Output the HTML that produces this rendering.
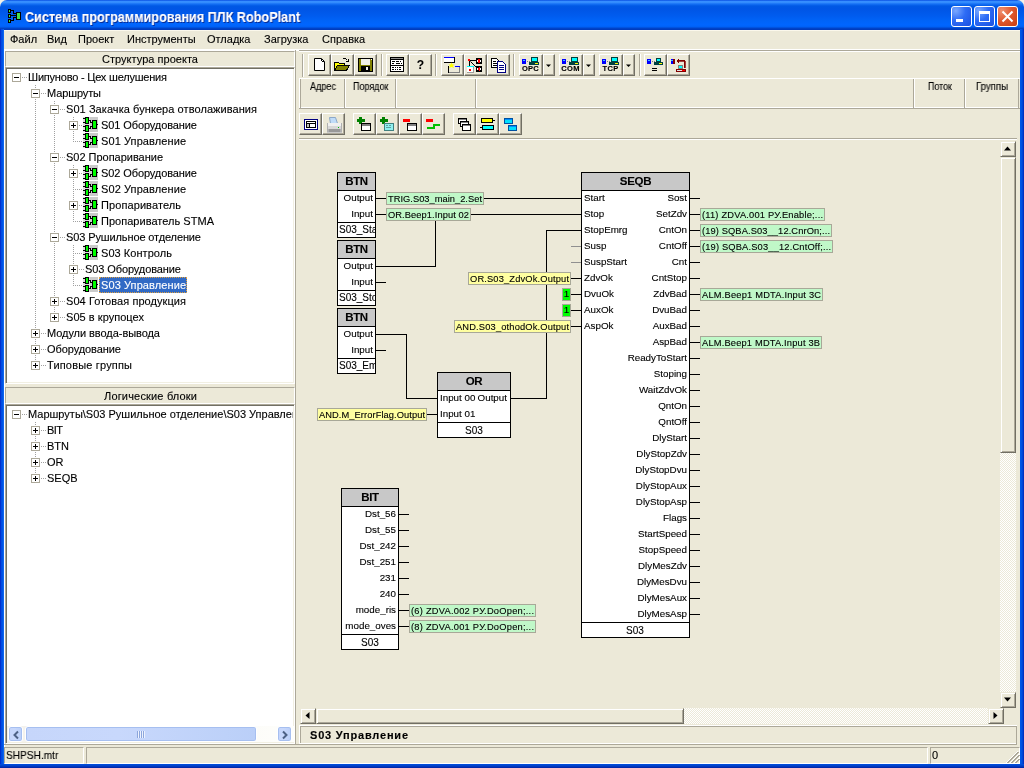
<!DOCTYPE html><html><head><meta charset="utf-8"><style>

*{margin:0;padding:0;box-sizing:border-box}
html,body{width:1024px;height:768px;overflow:hidden;background:#ECE9D8;font-family:'Liberation Sans', sans-serif;font-size:11px;color:#000}
div{position:absolute}
.t{will-change:transform;-webkit-text-stroke:0.12px currentColor}
.t{white-space:nowrap;line-height:13px}
.tb{border-top:1px solid #fff;border-left:1px solid #fff;border-right:1px solid #716F64;border-bottom:1px solid #716F64;box-shadow:inset -1px -1px 0 #ACA899}
svg{position:absolute;overflow:visible}

</style></head><body>
<div style="left:0;top:0;width:1024px;height:12px;background:#F4F1E8"></div>
<div style="left:0;top:0;width:1024px;height:30px;border-radius:7px 7px 0 0;background:linear-gradient(to bottom,#0040D8 0px,#2F86FF 1px,#3D95FF 2px,#1570F5 4px,#0058E4 6px,#0055E5 9px,#005CEF 16px,#0064F8 21px,#0066FF 25px,#0060F4 27px,#0046CC 28px,#0038B8 30px)"></div>
<svg style="left:8px;top:9px" width="14" height="15" shape-rendering="crispEdges"><rect x="0" y="0" width="3" height="4"/><rect x="0" y="5" width="3" height="4"/><rect x="0" y="10" width="3" height="4"/><rect x="1" y="1" width="1" height="2" fill="#40E040"/><rect x="1" y="6" width="1" height="2" fill="#40E040"/><rect x="1" y="11" width="1" height="2" fill="#40E040"/><rect x="3" y="1" width="3" height="1"/><rect x="5" y="1" width="1" height="4"/><rect x="5" y="4" width="3" height="1"/><rect x="3" y="6" width="5" height="1"/><rect x="3" y="11" width="3" height="1"/><rect x="5" y="8" width="1" height="4"/><rect x="5" y="8" width="3" height="1"/><rect x="8" y="3" width="5" height="8"/><rect x="9" y="4" width="3" height="6" fill="#48E048"/></svg>
<div class="t" style="left:25px;top:9px;font:bold 14px 'Liberation Sans', sans-serif;color:#fff;line-height:16px;text-shadow:1px 1px 0 #0A2A90;transform:scaleX(0.903);transform-origin:0 0">Система программирования ПЛК RoboPlant</div>
<div style="left:951px;top:6px;width:21px;height:21px;border:1px solid #fff;border-radius:3px;background:radial-gradient(circle at 20% 20%,#7AA8FF 0%,#2E6CF5 45%,#1A50E0 100%)">
<div style="left:4px;top:12px;width:7px;height:3px;background:#fff"></div>
</div>
<div style="left:974px;top:6px;width:21px;height:21px;border:1px solid #fff;border-radius:3px;background:radial-gradient(circle at 20% 20%,#7AA8FF 0%,#2E6CF5 45%,#1A50E0 100%)">
<div style="left:4px;top:4px;width:11px;height:11px;border:1px solid #fff;border-top-width:3px"></div>
</div>
<div style="left:997px;top:6px;width:21px;height:21px;border:1px solid #fff;border-radius:3px;background:radial-gradient(circle at 20% 20%,#F09070 0%,#E05A30 45%,#C83C10 100%)">
<svg style="left:4px;top:4px" width="11" height="11"><path d="M0.5 0.5L10.5 10.5M10.5 0.5L0.5 10.5" stroke="#fff" stroke-width="2"/></svg>
</div>
<div style="left:0;top:29px;width:4px;height:739px;background:linear-gradient(to right,#0018C0,#0048E0 1px,#0058E8 3px,#1A74FA 4px)"></div>
<div style="left:1020px;top:29px;width:4px;height:739px;background:linear-gradient(to right,#0058E8,#0050E0 2px,#0028B8 4px)"></div>
<div style="left:0;top:764px;width:1024px;height:4px;background:linear-gradient(to bottom,#0050E0,#0040C8 2px,#0020A0 4px)"></div>
<div style="left:4px;top:30px;width:1016px;height:1px;background:#FBF8EC"></div>
<div class="t" style="left:10px;top:33px;">Файл</div>
<div class="t" style="left:47px;top:33px;">Вид</div>
<div class="t" style="left:78px;top:33px;">Проект</div>
<div class="t" style="left:127px;top:33px;">Инструменты</div>
<div class="t" style="left:207px;top:33px;">Отладка</div>
<div class="t" style="left:264px;top:33px;">Загрузка</div>
<div class="t" style="left:322px;top:33px;">Справка</div>
<div style="left:4px;top:49px;width:1016px;height:2px;background:#fff"></div>
<div style="left:4px;top:49px;width:1px;height:715px;background:#fff"></div>
<svg width="0" height="0" style="left:0;top:0"><defs>
<symbol id="ico" viewBox="0 0 15 15" shape-rendering="crispEdges">
<rect x="0" y="0" width="15" height="15" fill="#CBCBCB"/>
<rect x="0" y="0" width="7" height="15" fill="#DCDCDC"/>
<rect x="0" y="1" width="2" height="1" fill="#000"/><rect x="0" y="5" width="2" height="1" fill="#000"/>
<rect x="0" y="9" width="2" height="1" fill="#000"/><rect x="0" y="13" width="2" height="1" fill="#000"/>
<rect x="2" y="0" width="4" height="7" fill="#000"/><rect x="3" y="1" width="2" height="5" fill="#00FF00"/>
<rect x="2" y="8" width="4" height="7" fill="#000"/><rect x="3" y="9" width="2" height="5" fill="#00FF00"/>
<rect x="6" y="3" width="2" height="1" fill="#000"/><rect x="7" y="3" width="1" height="3" fill="#000"/><rect x="7" y="5" width="2" height="1" fill="#000"/>
<rect x="6" y="11" width="2" height="1" fill="#000"/><rect x="7" y="9" width="1" height="3" fill="#000"/><rect x="7" y="9" width="2" height="1" fill="#000"/>
<rect x="9" y="3" width="5" height="9" fill="#000"/><rect x="10" y="4" width="3" height="7" fill="#00FF00"/>
<rect x="14" y="7" width="1" height="1" fill="#000"/>
</symbol>
</defs></svg>
<div style="left:5px;top:51px;width:290px;height:16px;background:#ECE9D8;border-top:1px solid #ACA899;border-left:1px solid #ACA899;border-right:1px solid #fff;border-bottom:1px solid #fff"></div>
<div class="t" style="left:102px;top:53px;font:11px 'Liberation Sans', sans-serif;;letter-spacing:0.029px">Структура проекта</div>
<div style="left:5px;top:67px;width:290px;height:317px;background:#fff;border-top:1px solid #ACA899;border-left:1px solid #ACA899;border-right:1px solid #fff;border-bottom:1px solid #fff;box-shadow:inset 1px 1px 0 #716F64,inset -1px -1px 0 #F1EFE2"></div>
<div style="left:35px;top:85px;width:1px;height:281px;background:repeating-linear-gradient(to bottom,#A0A0A0 0 1px,transparent 1px 2px)"></div>
<div style="left:54px;top:101px;width:1px;height:217px;background:repeating-linear-gradient(to bottom,#A0A0A0 0 1px,transparent 1px 2px)"></div>
<div style="left:73px;top:117px;width:1px;height:25px;background:repeating-linear-gradient(to bottom,#A0A0A0 0 1px,transparent 1px 2px)"></div>
<div style="left:73px;top:165px;width:1px;height:57px;background:repeating-linear-gradient(to bottom,#A0A0A0 0 1px,transparent 1px 2px)"></div>
<div style="left:73px;top:245px;width:1px;height:41px;background:repeating-linear-gradient(to bottom,#A0A0A0 0 1px,transparent 1px 2px)"></div>
<div style="left:16px;top:77px;width:11px;height:1px;background:repeating-linear-gradient(to right,#A0A0A0 0 1px,transparent 1px 2px)"></div>
<div style="left:12px;top:73px;width:9px;height:9px;border:1px solid #ACA899;background:#fff"></div>
<div style="left:14px;top:77px;width:5px;height:1px;background:#000"></div>
<div class="t" style="left:28px;top:71px;font:11px 'Liberation Sans', sans-serif;;letter-spacing:-0.203px">Шипуново - Цех шелушения</div>
<div style="left:35px;top:93px;width:11px;height:1px;background:repeating-linear-gradient(to right,#A0A0A0 0 1px,transparent 1px 2px)"></div>
<div style="left:31px;top:89px;width:9px;height:9px;border:1px solid #ACA899;background:#fff"></div>
<div style="left:33px;top:93px;width:5px;height:1px;background:#000"></div>
<div class="t" style="left:47px;top:87px;font:11px 'Liberation Sans', sans-serif;;letter-spacing:-0.114px">Маршруты</div>
<div style="left:54px;top:109px;width:11px;height:1px;background:repeating-linear-gradient(to right,#A0A0A0 0 1px,transparent 1px 2px)"></div>
<div style="left:50px;top:105px;width:9px;height:9px;border:1px solid #ACA899;background:#fff"></div>
<div style="left:52px;top:109px;width:5px;height:1px;background:#000"></div>
<div class="t" style="left:66px;top:103px;font:11px 'Liberation Sans', sans-serif;;letter-spacing:0.068px">S01 Закачка бункера отволаживания</div>
<div style="left:73px;top:125px;width:10px;height:1px;background:repeating-linear-gradient(to right,#A0A0A0 0 1px,transparent 1px 2px)"></div>
<div style="left:69px;top:121px;width:9px;height:9px;border:1px solid #ACA899;background:#fff"></div>
<div style="left:71px;top:125px;width:5px;height:1px;background:#000"></div>
<div style="left:73px;top:123px;width:1px;height:5px;background:#000"></div>
<svg style="left:83px;top:117px" width="15" height="15"><use href="#ico"/></svg>
<div class="t" style="left:101px;top:119px;font:11px 'Liberation Sans', sans-serif;;letter-spacing:-0.097px">S01 Оборудование</div>
<div style="left:73px;top:141px;width:10px;height:1px;background:repeating-linear-gradient(to right,#A0A0A0 0 1px,transparent 1px 2px)"></div>
<svg style="left:83px;top:133px" width="15" height="15"><use href="#ico"/></svg>
<div class="t" style="left:101px;top:135px;font:11px 'Liberation Sans', sans-serif;;letter-spacing:0.094px">S01 Управление</div>
<div style="left:54px;top:157px;width:11px;height:1px;background:repeating-linear-gradient(to right,#A0A0A0 0 1px,transparent 1px 2px)"></div>
<div style="left:50px;top:153px;width:9px;height:9px;border:1px solid #ACA899;background:#fff"></div>
<div style="left:52px;top:157px;width:5px;height:1px;background:#000"></div>
<div class="t" style="left:66px;top:151px;font:11px 'Liberation Sans', sans-serif;;letter-spacing:-0.019px">S02 Пропаривание</div>
<div style="left:73px;top:173px;width:10px;height:1px;background:repeating-linear-gradient(to right,#A0A0A0 0 1px,transparent 1px 2px)"></div>
<div style="left:69px;top:169px;width:9px;height:9px;border:1px solid #ACA899;background:#fff"></div>
<div style="left:71px;top:173px;width:5px;height:1px;background:#000"></div>
<div style="left:73px;top:171px;width:1px;height:5px;background:#000"></div>
<svg style="left:83px;top:165px" width="15" height="15"><use href="#ico"/></svg>
<div class="t" style="left:101px;top:167px;font:11px 'Liberation Sans', sans-serif;;letter-spacing:-0.097px">S02 Оборудование</div>
<div style="left:73px;top:189px;width:10px;height:1px;background:repeating-linear-gradient(to right,#A0A0A0 0 1px,transparent 1px 2px)"></div>
<svg style="left:83px;top:181px" width="15" height="15"><use href="#ico"/></svg>
<div class="t" style="left:101px;top:183px;font:11px 'Liberation Sans', sans-serif;;letter-spacing:0.094px">S02 Управление</div>
<div style="left:73px;top:205px;width:10px;height:1px;background:repeating-linear-gradient(to right,#A0A0A0 0 1px,transparent 1px 2px)"></div>
<div style="left:69px;top:201px;width:9px;height:9px;border:1px solid #ACA899;background:#fff"></div>
<div style="left:71px;top:205px;width:5px;height:1px;background:#000"></div>
<div style="left:73px;top:203px;width:1px;height:5px;background:#000"></div>
<svg style="left:83px;top:197px" width="15" height="15"><use href="#ico"/></svg>
<div class="t" style="left:101px;top:199px;font:11px 'Liberation Sans', sans-serif;;letter-spacing:0.092px">Пропариватель</div>
<div style="left:73px;top:221px;width:10px;height:1px;background:repeating-linear-gradient(to right,#A0A0A0 0 1px,transparent 1px 2px)"></div>
<svg style="left:83px;top:213px" width="15" height="15"><use href="#ico"/></svg>
<div class="t" style="left:101px;top:215px;font:11px 'Liberation Sans', sans-serif;;letter-spacing:0.028px">Пропариватель STMA</div>
<div style="left:54px;top:237px;width:11px;height:1px;background:repeating-linear-gradient(to right,#A0A0A0 0 1px,transparent 1px 2px)"></div>
<div style="left:50px;top:233px;width:9px;height:9px;border:1px solid #ACA899;background:#fff"></div>
<div style="left:52px;top:237px;width:5px;height:1px;background:#000"></div>
<div class="t" style="left:66px;top:231px;font:11px 'Liberation Sans', sans-serif;;letter-spacing:-0.116px">S03 Рушильное отделение</div>
<div style="left:73px;top:253px;width:10px;height:1px;background:repeating-linear-gradient(to right,#A0A0A0 0 1px,transparent 1px 2px)"></div>
<svg style="left:83px;top:245px" width="15" height="15"><use href="#ico"/></svg>
<div class="t" style="left:101px;top:247px;font:11px 'Liberation Sans', sans-serif;;letter-spacing:0.053px">S03 Контроль</div>
<div style="left:73px;top:269px;width:11px;height:1px;background:repeating-linear-gradient(to right,#A0A0A0 0 1px,transparent 1px 2px)"></div>
<div style="left:69px;top:265px;width:9px;height:9px;border:1px solid #ACA899;background:#fff"></div>
<div style="left:71px;top:269px;width:5px;height:1px;background:#000"></div>
<div style="left:73px;top:267px;width:1px;height:5px;background:#000"></div>
<div class="t" style="left:85px;top:263px;font:11px 'Liberation Sans', sans-serif;;letter-spacing:-0.097px">S03 Оборудование</div>
<div style="left:73px;top:285px;width:10px;height:1px;background:repeating-linear-gradient(to right,#A0A0A0 0 1px,transparent 1px 2px)"></div>
<svg style="left:83px;top:277px" width="15" height="15"><use href="#ico"/></svg>
<div style="left:99px;top:277px;width:88px;height:16px;background:#316AC5;outline:1px dotted #E0A040;outline-offset:-1px"></div>
<div class="t" style="left:101px;top:279px;font:11px 'Liberation Sans', sans-serif;color:#fff;letter-spacing:0.094px">S03 Управление</div>
<div style="left:54px;top:301px;width:11px;height:1px;background:repeating-linear-gradient(to right,#A0A0A0 0 1px,transparent 1px 2px)"></div>
<div style="left:50px;top:297px;width:9px;height:9px;border:1px solid #ACA899;background:#fff"></div>
<div style="left:52px;top:301px;width:5px;height:1px;background:#000"></div>
<div style="left:54px;top:299px;width:1px;height:5px;background:#000"></div>
<div class="t" style="left:66px;top:295px;font:11px 'Liberation Sans', sans-serif;;letter-spacing:0.065px">S04 Готовая продукция</div>
<div style="left:54px;top:317px;width:11px;height:1px;background:repeating-linear-gradient(to right,#A0A0A0 0 1px,transparent 1px 2px)"></div>
<div style="left:50px;top:313px;width:9px;height:9px;border:1px solid #ACA899;background:#fff"></div>
<div style="left:52px;top:317px;width:5px;height:1px;background:#000"></div>
<div style="left:54px;top:315px;width:1px;height:5px;background:#000"></div>
<div class="t" style="left:66px;top:311px;font:11px 'Liberation Sans', sans-serif;;letter-spacing:0.041px">S05 в крупоцех</div>
<div style="left:35px;top:333px;width:11px;height:1px;background:repeating-linear-gradient(to right,#A0A0A0 0 1px,transparent 1px 2px)"></div>
<div style="left:31px;top:329px;width:9px;height:9px;border:1px solid #ACA899;background:#fff"></div>
<div style="left:33px;top:333px;width:5px;height:1px;background:#000"></div>
<div style="left:35px;top:331px;width:1px;height:5px;background:#000"></div>
<div class="t" style="left:47px;top:327px;font:11px 'Liberation Sans', sans-serif;;letter-spacing:-0.055px">Модули ввода-вывода</div>
<div style="left:35px;top:349px;width:11px;height:1px;background:repeating-linear-gradient(to right,#A0A0A0 0 1px,transparent 1px 2px)"></div>
<div style="left:31px;top:345px;width:9px;height:9px;border:1px solid #ACA899;background:#fff"></div>
<div style="left:33px;top:349px;width:5px;height:1px;background:#000"></div>
<div style="left:35px;top:347px;width:1px;height:5px;background:#000"></div>
<div class="t" style="left:47px;top:343px;font:11px 'Liberation Sans', sans-serif;;letter-spacing:-0.075px">Оборудование</div>
<div style="left:35px;top:365px;width:11px;height:1px;background:repeating-linear-gradient(to right,#A0A0A0 0 1px,transparent 1px 2px)"></div>
<div style="left:31px;top:361px;width:9px;height:9px;border:1px solid #ACA899;background:#fff"></div>
<div style="left:33px;top:365px;width:5px;height:1px;background:#000"></div>
<div style="left:35px;top:363px;width:1px;height:5px;background:#000"></div>
<div class="t" style="left:47px;top:359px;font:11px 'Liberation Sans', sans-serif;;letter-spacing:0.175px">Типовые группы</div>
<div style="left:5px;top:387px;width:290px;height:17px;background:#ECE9D8;border-top:1px solid #ACA899;border-left:1px solid #ACA899;border-right:1px solid #fff;border-bottom:1px solid #fff"></div>
<div class="t" style="left:104px;top:390px;font:11px 'Liberation Sans', sans-serif;;letter-spacing:0.173px">Логические блоки</div>
<div style="left:5px;top:404px;width:290px;height:340px;background:#fff;border-top:1px solid #ACA899;border-left:1px solid #ACA899;border-right:1px solid #fff;border-bottom:1px solid #fff;box-shadow:inset 1px 1px 0 #716F64,inset -1px -1px 0 #F1EFE2"></div>
<div style="left:35px;top:422px;width:1px;height:57px;background:repeating-linear-gradient(to bottom,#A0A0A0 0 1px,transparent 1px 2px)"></div>
<div style="left:16px;top:414px;width:11px;height:1px;background:repeating-linear-gradient(to right,#A0A0A0 0 1px,transparent 1px 2px)"></div>
<div style="left:12px;top:410px;width:9px;height:9px;border:1px solid #ACA899;background:#fff"></div>
<div style="left:14px;top:414px;width:5px;height:1px;background:#000"></div>
<div class="t" style="left:28px;top:408px;width:265px;overflow:hidden">Маршруты\S03 Рушильное отделение\S03 Управление</div>
<div style="left:35px;top:430px;width:11px;height:1px;background:repeating-linear-gradient(to right,#A0A0A0 0 1px,transparent 1px 2px)"></div>
<div style="left:31px;top:426px;width:9px;height:9px;border:1px solid #ACA899;background:#fff"></div>
<div style="left:33px;top:430px;width:5px;height:1px;background:#000"></div>
<div style="left:35px;top:428px;width:1px;height:5px;background:#000"></div>
<div class="t" style="left:47px;top:424px;font:11px 'Liberation Sans', sans-serif;;letter-spacing:-0.562px">BIT</div>
<div style="left:35px;top:446px;width:11px;height:1px;background:repeating-linear-gradient(to right,#A0A0A0 0 1px,transparent 1px 2px)"></div>
<div style="left:31px;top:442px;width:9px;height:9px;border:1px solid #ACA899;background:#fff"></div>
<div style="left:33px;top:446px;width:5px;height:1px;background:#000"></div>
<div style="left:35px;top:444px;width:1px;height:5px;background:#000"></div>
<div class="t" style="left:47px;top:440px;width:246px;overflow:hidden">BTN</div>
<div style="left:35px;top:462px;width:11px;height:1px;background:repeating-linear-gradient(to right,#A0A0A0 0 1px,transparent 1px 2px)"></div>
<div style="left:31px;top:458px;width:9px;height:9px;border:1px solid #ACA899;background:#fff"></div>
<div style="left:33px;top:462px;width:5px;height:1px;background:#000"></div>
<div style="left:35px;top:460px;width:1px;height:5px;background:#000"></div>
<div class="t" style="left:47px;top:456px;width:246px;overflow:hidden">OR</div>
<div style="left:35px;top:478px;width:11px;height:1px;background:repeating-linear-gradient(to right,#A0A0A0 0 1px,transparent 1px 2px)"></div>
<div style="left:31px;top:474px;width:9px;height:9px;border:1px solid #ACA899;background:#fff"></div>
<div style="left:33px;top:478px;width:5px;height:1px;background:#000"></div>
<div style="left:35px;top:476px;width:1px;height:5px;background:#000"></div>
<div class="t" style="left:47px;top:472px;width:246px;overflow:hidden">SEQB</div>
<div style="left:295px;top:50px;width:1px;height:694px;background:#ACA899"></div>
<div style="left:299px;top:50px;width:721px;height:1px;background:#ACA899"></div>
<div style="left:299px;top:51px;width:721px;height:1px;background:#fff"></div>
<div style="left:302px;top:54px;width:1px;height:23px;background:#ACA899"></div><div style="left:303px;top:54px;width:1px;height:23px;background:#fff"></div>
<div style="left:308px;top:54px;width:23px;height:22px;background:#ECE9D8;border-top:1px solid #fff;border-left:1px solid #fff;border-right:1px solid #716F64;border-bottom:1px solid #716F64;box-shadow:inset -1px -1px 0 #ACA899"></div>
<div style="left:331px;top:54px;width:23px;height:22px;background:#ECE9D8;border-top:1px solid #fff;border-left:1px solid #fff;border-right:1px solid #716F64;border-bottom:1px solid #716F64;box-shadow:inset -1px -1px 0 #ACA899"></div>
<div style="left:354px;top:54px;width:23px;height:22px;background:#ECE9D8;border-top:1px solid #fff;border-left:1px solid #fff;border-right:1px solid #716F64;border-bottom:1px solid #716F64;box-shadow:inset -1px -1px 0 #ACA899"></div>
<div style="left:381px;top:54px;width:1px;height:22px;background:#ACA899"></div><div style="left:382px;top:54px;width:1px;height:22px;background:#fff"></div>
<div style="left:386px;top:54px;width:23px;height:22px;background:#ECE9D8;border-top:1px solid #fff;border-left:1px solid #fff;border-right:1px solid #716F64;border-bottom:1px solid #716F64;box-shadow:inset -1px -1px 0 #ACA899"></div>
<div style="left:409px;top:54px;width:23px;height:22px;background:#ECE9D8;border-top:1px solid #fff;border-left:1px solid #fff;border-right:1px solid #716F64;border-bottom:1px solid #716F64;box-shadow:inset -1px -1px 0 #ACA899"></div>
<div style="left:435px;top:54px;width:1px;height:22px;background:#ACA899"></div><div style="left:436px;top:54px;width:1px;height:22px;background:#fff"></div>
<div style="left:441px;top:54px;width:23px;height:22px;background:#ECE9D8;border-top:1px solid #fff;border-left:1px solid #fff;border-right:1px solid #716F64;border-bottom:1px solid #716F64;box-shadow:inset -1px -1px 0 #ACA899"></div>
<div style="left:464px;top:54px;width:23px;height:22px;background:#ECE9D8;border-top:1px solid #fff;border-left:1px solid #fff;border-right:1px solid #716F64;border-bottom:1px solid #716F64;box-shadow:inset -1px -1px 0 #ACA899"></div>
<div style="left:487px;top:54px;width:23px;height:22px;background:#ECE9D8;border-top:1px solid #fff;border-left:1px solid #fff;border-right:1px solid #716F64;border-bottom:1px solid #716F64;box-shadow:inset -1px -1px 0 #ACA899"></div>
<div style="left:513px;top:54px;width:1px;height:22px;background:#ACA899"></div><div style="left:514px;top:54px;width:1px;height:22px;background:#fff"></div>
<div style="left:519px;top:54px;width:24px;height:22px;background:#ECE9D8;border-top:1px solid #fff;border-left:1px solid #fff;border-right:1px solid #716F64;border-bottom:1px solid #716F64;box-shadow:inset -1px -1px 0 #ACA899"></div>
<div style="left:543px;top:54px;width:12px;height:22px;background:#ECE9D8;border-top:1px solid #fff;border-left:1px solid #fff;border-right:1px solid #716F64;border-bottom:1px solid #716F64;box-shadow:inset -1px -1px 0 #ACA899"></div>
<div style="left:559px;top:54px;width:24px;height:22px;background:#ECE9D8;border-top:1px solid #fff;border-left:1px solid #fff;border-right:1px solid #716F64;border-bottom:1px solid #716F64;box-shadow:inset -1px -1px 0 #ACA899"></div>
<div style="left:583px;top:54px;width:12px;height:22px;background:#ECE9D8;border-top:1px solid #fff;border-left:1px solid #fff;border-right:1px solid #716F64;border-bottom:1px solid #716F64;box-shadow:inset -1px -1px 0 #ACA899"></div>
<div style="left:599px;top:54px;width:24px;height:22px;background:#ECE9D8;border-top:1px solid #fff;border-left:1px solid #fff;border-right:1px solid #716F64;border-bottom:1px solid #716F64;box-shadow:inset -1px -1px 0 #ACA899"></div>
<div style="left:623px;top:54px;width:12px;height:22px;background:#ECE9D8;border-top:1px solid #fff;border-left:1px solid #fff;border-right:1px solid #716F64;border-bottom:1px solid #716F64;box-shadow:inset -1px -1px 0 #ACA899"></div>
<div style="left:639px;top:54px;width:1px;height:22px;background:#ACA899"></div><div style="left:640px;top:54px;width:1px;height:22px;background:#fff"></div>
<div style="left:644px;top:54px;width:23px;height:22px;background:#ECE9D8;border-top:1px solid #fff;border-left:1px solid #fff;border-right:1px solid #716F64;border-bottom:1px solid #716F64;box-shadow:inset -1px -1px 0 #ACA899"></div>
<div style="left:667px;top:54px;width:23px;height:22px;background:#ECE9D8;border-top:1px solid #fff;border-left:1px solid #fff;border-right:1px solid #716F64;border-bottom:1px solid #716F64;box-shadow:inset -1px -1px 0 #ACA899"></div>
<div style="left:299px;top:78px;width:721px;height:1px;background:#fff"></div>
<div style="left:299px;top:108px;width:721px;height:1px;background:#ACA899"></div>
<div style="left:301px;top:107px;width:717px;height:1px;background:#fff"></div>
<div style="left:299px;top:78px;width:1px;height:30px;background:#fff"></div>
<div style="left:300px;top:79px;width:1px;height:29px;background:#ACA899"></div>
<div style="left:344px;top:79px;width:1px;height:29px;background:#ACA899"></div><div style="left:345px;top:79px;width:1px;height:29px;background:#fff"></div>
<div style="left:395px;top:79px;width:1px;height:29px;background:#ACA899"></div><div style="left:396px;top:79px;width:1px;height:29px;background:#fff"></div>
<div style="left:475px;top:79px;width:1px;height:29px;background:#ACA899"></div><div style="left:476px;top:79px;width:1px;height:29px;background:#fff"></div>
<div style="left:913px;top:79px;width:1px;height:29px;background:#ACA899"></div><div style="left:914px;top:79px;width:1px;height:29px;background:#fff"></div>
<div style="left:964px;top:79px;width:1px;height:29px;background:#ACA899"></div><div style="left:965px;top:79px;width:1px;height:29px;background:#fff"></div>
<div style="left:1018px;top:79px;width:1px;height:29px;background:#ACA899"></div>
<div class="t" style="left:310px;top:80px;font:10px 'Liberation Sans', sans-serif;line-height:13px;transform-origin:0 0;transform:scaleX(0.9045)">Адрес</div>
<div class="t" style="left:353px;top:80px;font:10px 'Liberation Sans', sans-serif;line-height:13px;transform-origin:0 0;transform:scaleX(0.8987)">Порядок</div>
<div class="t" style="left:928px;top:80px;font:10px 'Liberation Sans', sans-serif;line-height:13px;transform-origin:0 0;transform:scaleX(0.8867)">Поток</div>
<div class="t" style="left:975.5px;top:80px;font:10px 'Liberation Sans', sans-serif;line-height:13px;transform-origin:0 0;transform:scaleX(0.9589)">Группы</div>
<div style="left:299px;top:113px;width:23px;height:22px;background:#ECE9D8;border-top:1px solid #fff;border-left:1px solid #fff;border-right:1px solid #716F64;border-bottom:1px solid #716F64;box-shadow:inset -1px -1px 0 #ACA899"></div>
<div style="left:322px;top:113px;width:23px;height:22px;background:#ECE9D8;border-top:1px solid #fff;border-left:1px solid #fff;border-right:1px solid #716F64;border-bottom:1px solid #716F64;box-shadow:inset -1px -1px 0 #ACA899"></div>
<div style="left:353px;top:113px;width:23px;height:22px;background:#ECE9D8;border-top:1px solid #fff;border-left:1px solid #fff;border-right:1px solid #716F64;border-bottom:1px solid #716F64;box-shadow:inset -1px -1px 0 #ACA899"></div>
<div style="left:376px;top:113px;width:23px;height:22px;background:#ECE9D8;border-top:1px solid #fff;border-left:1px solid #fff;border-right:1px solid #716F64;border-bottom:1px solid #716F64;box-shadow:inset -1px -1px 0 #ACA899"></div>
<div style="left:399px;top:113px;width:23px;height:22px;background:#ECE9D8;border-top:1px solid #fff;border-left:1px solid #fff;border-right:1px solid #716F64;border-bottom:1px solid #716F64;box-shadow:inset -1px -1px 0 #ACA899"></div>
<div style="left:422px;top:113px;width:23px;height:22px;background:#ECE9D8;border-top:1px solid #fff;border-left:1px solid #fff;border-right:1px solid #716F64;border-bottom:1px solid #716F64;box-shadow:inset -1px -1px 0 #ACA899"></div>
<div style="left:453px;top:113px;width:23px;height:22px;background:#ECE9D8;border-top:1px solid #fff;border-left:1px solid #fff;border-right:1px solid #716F64;border-bottom:1px solid #716F64;box-shadow:inset -1px -1px 0 #ACA899"></div>
<div style="left:476px;top:113px;width:23px;height:22px;background:#ECE9D8;border-top:1px solid #fff;border-left:1px solid #fff;border-right:1px solid #716F64;border-bottom:1px solid #716F64;box-shadow:inset -1px -1px 0 #ACA899"></div>
<div style="left:499px;top:113px;width:23px;height:22px;background:#ECE9D8;border-top:1px solid #fff;border-left:1px solid #fff;border-right:1px solid #716F64;border-bottom:1px solid #716F64;box-shadow:inset -1px -1px 0 #ACA899"></div>
<div style="left:299px;top:138px;width:718px;height:1px;background:#ACA899"></div>
<div style="left:299px;top:139px;width:718px;height:1px;background:#fff"></div>
<div style="left:1000px;top:157px;width:16px;height:535px;background-color:#fff;background-image:linear-gradient(45deg,#ECE9D8 25%,transparent 25%,transparent 75%,#ECE9D8 75%),linear-gradient(45deg,#ECE9D8 25%,transparent 25%,transparent 75%,#ECE9D8 75%);background-size:2px 2px;background-position:0 0,1px 1px"></div>
<div style="left:1000px;top:141px;width:16px;height:16px;background:#ECE9D8;border-top:1px solid #ECE9D8;border-left:1px solid #ECE9D8;border-right:1px solid #716F64;border-bottom:1px solid #716F64;box-shadow:inset 1px 1px 0 #fff,inset -1px -1px 0 #ACA899"></div>
<svg style="left:1004px;top:146px" width="8" height="5"><path d="M0 4.5h7L3.5 0.5z" fill="#000"/></svg>
<div style="left:1000px;top:157px;width:16px;height:296px;background:#ECE9D8;border-top:1px solid #ECE9D8;border-left:1px solid #ECE9D8;border-right:1px solid #716F64;border-bottom:1px solid #716F64;box-shadow:inset 1px 1px 0 #fff,inset -1px -1px 0 #ACA899"></div>
<div style="left:1000px;top:692px;width:16px;height:16px;background:#ECE9D8;border-top:1px solid #ECE9D8;border-left:1px solid #ECE9D8;border-right:1px solid #716F64;border-bottom:1px solid #716F64;box-shadow:inset 1px 1px 0 #fff,inset -1px -1px 0 #ACA899"></div>
<svg style="left:1004px;top:697px" width="8" height="5"><path d="M0 0.5h7L3.5 4.5z" fill="#000"/></svg>
<div style="left:316px;top:708px;width:672px;height:16px;background-color:#fff;background-image:linear-gradient(45deg,#ECE9D8 25%,transparent 25%,transparent 75%,#ECE9D8 75%),linear-gradient(45deg,#ECE9D8 25%,transparent 25%,transparent 75%,#ECE9D8 75%);background-size:2px 2px;background-position:0 0,1px 1px"></div>
<div style="left:300px;top:708px;width:16px;height:16px;background:#ECE9D8;border-top:1px solid #ECE9D8;border-left:1px solid #ECE9D8;border-right:1px solid #716F64;border-bottom:1px solid #716F64;box-shadow:inset 1px 1px 0 #fff,inset -1px -1px 0 #ACA899"></div>
<svg style="left:305px;top:712px" width="5" height="8"><path d="M4.5 0v7L0.5 3.5z" fill="#000"/></svg>
<div style="left:316px;top:708px;width:368px;height:16px;background:#ECE9D8;border-top:1px solid #ECE9D8;border-left:1px solid #ECE9D8;border-right:1px solid #716F64;border-bottom:1px solid #716F64;box-shadow:inset 1px 1px 0 #fff,inset -1px -1px 0 #ACA899"></div>
<div style="left:988px;top:708px;width:16px;height:16px;background:#ECE9D8;border-top:1px solid #ECE9D8;border-left:1px solid #ECE9D8;border-right:1px solid #716F64;border-bottom:1px solid #716F64;box-shadow:inset 1px 1px 0 #fff,inset -1px -1px 0 #ACA899"></div>
<svg style="left:993px;top:712px" width="5" height="8"><path d="M0.5 0v7L4.5 3.5z" fill="#000"/></svg>
<div style="left:299px;top:725px;width:718px;height:19px;border-top:1px solid #fff;border-left:1px solid #fff;box-shadow:inset 1px 1px 0 #ACA899"></div>
<div style="left:300px;top:726px;width:717px;height:18px;border-right:1px solid #fff;border-bottom:1px solid #fff"></div>
<div class="t" style="left:310px;top:729px;font:bold 11px 'Liberation Sans', sans-serif;font-weight:bold;letter-spacing:0.797px">S03 Управление</div>
<div style="left:4px;top:744px;width:1013px;height:1px;background:#ACA899"></div>
<div style="left:1016px;top:726px;width:1px;height:19px;background:#ACA899"></div>
<div style="left:4px;top:747px;width:80px;height:17px;border-top:1px solid #ACA899;border-left:1px solid #ACA899;border-right:1px solid #fff;border-bottom:1px solid #fff"></div>
<div style="left:86px;top:747px;width:842px;height:17px;border-top:1px solid #ACA899;border-left:1px solid #ACA899;border-right:1px solid #fff;border-bottom:1px solid #fff"></div>
<div style="left:930px;top:747px;width:90px;height:17px;border-top:1px solid #ACA899;border-left:1px solid #ACA899;border-right:1px solid #fff;border-bottom:1px solid #fff"></div>
<div class="t" style="left:6px;top:749px;transform:scaleX(0.92);transform-origin:0 0">SHPSH.mtr</div>
<div class="t" style="left:932px;top:749px;">0</div>
<svg style="left:1006px;top:750px" width="13" height="13" shape-rendering="crispEdges"><rect x="11" y="1" width="1" height="1" fill="#fff"/><rect x="10" y="2" width="1" height="1" fill="#fff"/><rect x="9" y="3" width="1" height="1" fill="#fff"/><rect x="8" y="4" width="1" height="1" fill="#fff"/><rect x="7" y="5" width="1" height="1" fill="#fff"/><rect x="6" y="6" width="1" height="1" fill="#fff"/><rect x="5" y="7" width="1" height="1" fill="#fff"/><rect x="4" y="8" width="1" height="1" fill="#fff"/><rect x="3" y="9" width="1" height="1" fill="#fff"/><rect x="2" y="10" width="1" height="1" fill="#fff"/><rect x="1" y="11" width="1" height="1" fill="#fff"/><rect x="0" y="12" width="1" height="1" fill="#fff"/><rect x="11" y="2" width="2" height="1" fill="#ACA899"/><rect x="10" y="3" width="2" height="1" fill="#ACA899"/><rect x="9" y="4" width="2" height="1" fill="#ACA899"/><rect x="8" y="5" width="2" height="1" fill="#ACA899"/><rect x="7" y="6" width="2" height="1" fill="#ACA899"/><rect x="6" y="7" width="2" height="1" fill="#ACA899"/><rect x="5" y="8" width="2" height="1" fill="#ACA899"/><rect x="4" y="9" width="2" height="1" fill="#ACA899"/><rect x="3" y="10" width="2" height="1" fill="#ACA899"/><rect x="2" y="11" width="2" height="1" fill="#ACA899"/><rect x="1" y="12" width="2" height="1" fill="#ACA899"/><rect x="12" y="4" width="1" height="1" fill="#fff"/><rect x="11" y="5" width="1" height="1" fill="#fff"/><rect x="10" y="6" width="1" height="1" fill="#fff"/><rect x="9" y="7" width="1" height="1" fill="#fff"/><rect x="8" y="8" width="1" height="1" fill="#fff"/><rect x="7" y="9" width="1" height="1" fill="#fff"/><rect x="6" y="10" width="1" height="1" fill="#fff"/><rect x="5" y="11" width="1" height="1" fill="#fff"/><rect x="4" y="12" width="1" height="1" fill="#fff"/><rect x="12" y="5" width="2" height="1" fill="#ACA899"/><rect x="11" y="6" width="2" height="1" fill="#ACA899"/><rect x="10" y="7" width="2" height="1" fill="#ACA899"/><rect x="9" y="8" width="2" height="1" fill="#ACA899"/><rect x="8" y="9" width="2" height="1" fill="#ACA899"/><rect x="7" y="10" width="2" height="1" fill="#ACA899"/><rect x="6" y="11" width="2" height="1" fill="#ACA899"/><rect x="5" y="12" width="2" height="1" fill="#ACA899"/><rect x="12" y="8" width="1" height="1" fill="#fff"/><rect x="11" y="9" width="1" height="1" fill="#fff"/><rect x="10" y="10" width="1" height="1" fill="#fff"/><rect x="9" y="11" width="1" height="1" fill="#fff"/><rect x="8" y="12" width="1" height="1" fill="#fff"/><rect x="12" y="9" width="2" height="1" fill="#ACA899"/><rect x="11" y="10" width="2" height="1" fill="#ACA899"/><rect x="10" y="11" width="2" height="1" fill="#ACA899"/><rect x="9" y="12" width="2" height="1" fill="#ACA899"/></svg>
<div style="left:7px;top:726px;width:287px;height:16px;background:linear-gradient(to right,#F3F1EC,#FEFEFB)"></div>
<div style="left:8px;top:726px;width:15px;height:16px;border:1px solid #fff;border-radius:3px;background:linear-gradient(to right,#C6D6FB,#C8D8FC 40%,#BACFF8);box-shadow:inset 0 0 0 1px #A6BFF0"><svg style="left:4px;top:4px" width="6" height="8"><path d="M5 0.5L1.5 4L5 7.5" fill="none" stroke="#4D6185" stroke-width="2"/></svg></div>
<div style="left:25px;top:726px;width:232px;height:16px;border:1px solid #fff;border-radius:3px;background:linear-gradient(to right,#C6D6FB,#C8D8FC 40%,#BACFF8);box-shadow:inset 0 0 0 1px #A6BFF0"><div style="left:111px;top:4px;width:8px;height:7px;background:repeating-linear-gradient(to right,#8CA6DC 0 1px,#EEF3FE 1px 2px)"></div></div>
<div style="left:277px;top:726px;width:15px;height:16px;border:1px solid #fff;border-radius:3px;background:linear-gradient(to right,#C6D6FB,#C8D8FC 40%,#BACFF8);box-shadow:inset 0 0 0 1px #A6BFF0"><svg style="left:4px;top:4px" width="6" height="8"><path d="M1 0.5L4.5 4L1 7.5" fill="none" stroke="#4D6185" stroke-width="2"/></svg></div>
<svg style="left:312px;top:57px" width="16" height="16" viewBox="0 0 16 16" shape-rendering="crispEdges"><path d="M2.5 1.5h7l3 3v9h-10z" fill="#fff" stroke="#000" shape-rendering="auto"/><rect x="9" y="2" width="1" height="2" fill="#000"/><rect x="10" y="4" width="2" height="1" fill="#000"/></svg>
<svg style="left:334px;top:57px" width="16" height="16" viewBox="0 0 16 16" shape-rendering="crispEdges"><path d="M0.5 5.5h4l1 1h5v2h-7l-3 5z" fill="#FFFF00" stroke="#000"/><path d="M0.5 13.5l3-5h12l-3 5z" fill="#808000" stroke="#000"/><path d="M8.5 2.5l1-1h2l1 1 1 1" fill="none" stroke="#000"/><rect x="12" y="4" width="3" height="1" fill="#000"/><rect x="14" y="2" width="1" height="3" fill="#000"/></svg>
<svg style="left:358px;top:57px" width="16" height="16" viewBox="0 0 16 16" shape-rendering="crispEdges"><rect x="0" y="1" width="15" height="14" fill="#000"/><rect x="1" y="2" width="13" height="12" fill="#808000"/><rect x="3" y="2" width="9" height="6" fill="#F0F0E8"/><rect x="3" y="9" width="9" height="5" fill="#000"/><rect x="8" y="10" width="2" height="3" fill="#F0F0E8"/><rect x="13" y="2" width="1" height="1" fill="#fff"/></svg>
<svg style="left:390px;top:57px" width="16" height="16" viewBox="0 0 16 16" shape-rendering="crispEdges"><rect x="0" y="0" width="14" height="15" fill="#000"/><rect x="1" y="1" width="12" height="1" fill="#909090"/><rect x="1" y="3" width="12" height="5" fill="#fff"/><rect x="1" y="9" width="12" height="5" fill="#fff"/><rect x="2" y="4" width="3" height="1" fill="#000"/><rect x="6" y="4" width="3" height="1" fill="#000"/><rect x="10" y="4" width="1" height="1" fill="#000"/><rect x="2" y="6" width="2" height="1" fill="#000"/><rect x="6" y="6" width="4" height="1" fill="#000"/><rect x="11" y="6" width="1" height="1" fill="#000"/><rect x="2" y="10" width="2" height="1" fill="#000"/><rect x="5" y="10" width="1" height="1" fill="#000"/><rect x="7" y="10" width="1" height="1" fill="#000"/><rect x="9" y="10" width="2" height="1" fill="#000"/><rect x="2" y="12" width="2" height="1" fill="#000"/><rect x="5" y="12" width="1" height="1" fill="#000"/><rect x="7" y="12" width="1" height="1" fill="#000"/><rect x="9" y="12" width="2" height="1" fill="#000"/></svg>
<div class="t" style="left:409px;top:58px;width:23px;text-align:center;font:bold 12px 'Liberation Sans', sans-serif;line-height:14px">?</div>
<svg style="left:441px;top:54px" width="23" height="22" viewBox="0 0 23 22" shape-rendering="crispEdges"><rect x="3" y="3" width="10" height="1" fill="#0000FF"/><rect x="3" y="4" width="10" height="4" fill="#fff"/><rect x="3" y="8" width="11" height="1" fill="#000"/><rect x="13" y="3" width="1" height="6" fill="#000"/><rect x="7" y="12" width="1" height="7" fill="#000"/><rect x="8" y="13" width="10" height="5" fill="#ECE9D8"/><rect x="14" y="12" width="5" height="1" fill="#0000FF"/><rect x="8" y="18" width="11" height="1" fill="#808080"/><rect x="18" y="13" width="1" height="6" fill="#808080"/><path d="M10.5 8.5l1 2h2l-1.5 1.5 1 2-2.5-1-2.5 1 1-2-1.5-1.5h2z" fill="#FFFF00" shape-rendering="auto"/></svg>
<svg style="left:464px;top:54px" width="23" height="22" viewBox="0 0 23 22" shape-rendering="crispEdges"><rect x="4" y="5" width="2" height="2" fill="#FF0000"/><rect x="6" y="6" width="6" height="1" fill="#000"/><rect x="5" y="7" width="1" height="5" fill="#000"/><path d="M6.5 7.5L12.5 13.5" stroke="#000" shape-rendering="auto"/><rect x="12" y="4" width="6" height="6" fill="#000"/><rect x="13" y="6" width="4" height="2" fill="#fff"/><rect x="14" y="5" width="2" height="4" fill="#FF0000"/><rect x="12" y="12" width="6" height="6" fill="#000"/><rect x="13" y="14" width="4" height="2" fill="#fff"/><rect x="14" y="14" width="2" height="2" fill="#FF0000"/><rect x="15" y="13" width="1" height="4" fill="#FF0000"/><rect x="3" y="12" width="7" height="1" fill="#00FFFF"/><rect x="3" y="13" width="7" height="6" fill="#fff"/><rect x="3" y="18" width="7" height="1" fill="#A0A0A0"/><rect x="9" y="13" width="1" height="6" fill="#A0A0A0"/><rect x="5" y="15" width="2" height="2" fill="#FF0000"/></svg>
<svg style="left:487px;top:54px" width="23" height="22" viewBox="0 0 23 22" shape-rendering="crispEdges"><path d="M4.5 4.5h5l2 2v7h-7z" fill="#fff" stroke="#000"/><rect x="6" y="7" width="3" height="1" fill="#000"/><rect x="6" y="9" width="4" height="1" fill="#000"/><rect x="6" y="11" width="4" height="1" fill="#000"/><path d="M10.5 7.5h5l3 3v8h-8z" fill="#fff" stroke="#000080"/><rect x="12" y="11" width="5" height="1" fill="#000080"/><rect x="12" y="13" width="5" height="1" fill="#000080"/><rect x="12" y="15" width="5" height="1" fill="#000080"/></svg>
<svg style="left:519px;top:54px" width="24" height="22" shape-rendering="crispEdges"><rect x="3" y="5" width="4" height="5" fill="#0000FF"/><rect x="4" y="6" width="2" height="1" fill="#40C0FF"/><rect x="8" y="7" width="1" height="1" fill="#808080"/><rect x="10" y="7" width="1" height="1" fill="#808080"/><rect x="12" y="3" width="7" height="5" fill="#004040"/><rect x="13" y="4" width="5" height="3" fill="#00FFFF"/><rect x="10" y="8" width="10" height="3" fill="#004040"/><rect x="16" y="9" width="3" height="1" fill="#FFFF00"/></svg>
<div class="t" style="left:519px;top:65px;width:23px;text-align:center;font:bold 7.5px 'Liberation Sans', sans-serif;line-height:8px;letter-spacing:0.3px">OPC</div>
<svg style="left:546px;top:64px" width="6" height="4"><path d="M0 0.5h5l-2.5 2.5z" fill="#000"/></svg>
<svg style="left:559px;top:54px" width="24" height="22" shape-rendering="crispEdges"><rect x="3" y="5" width="4" height="5" fill="#0000FF"/><rect x="4" y="6" width="2" height="1" fill="#40C0FF"/><rect x="8" y="7" width="1" height="1" fill="#808080"/><rect x="10" y="7" width="1" height="1" fill="#808080"/><rect x="12" y="3" width="7" height="5" fill="#004040"/><rect x="13" y="4" width="5" height="3" fill="#00FFFF"/><rect x="10" y="8" width="10" height="3" fill="#004040"/><rect x="16" y="9" width="3" height="1" fill="#FFFF00"/></svg>
<div class="t" style="left:559px;top:65px;width:23px;text-align:center;font:bold 7.5px 'Liberation Sans', sans-serif;line-height:8px;letter-spacing:0.3px">COM</div>
<svg style="left:586px;top:64px" width="6" height="4"><path d="M0 0.5h5l-2.5 2.5z" fill="#000"/></svg>
<svg style="left:599px;top:54px" width="24" height="22" shape-rendering="crispEdges"><rect x="3" y="5" width="4" height="5" fill="#0000FF"/><rect x="4" y="6" width="2" height="1" fill="#40C0FF"/><rect x="8" y="7" width="1" height="1" fill="#808080"/><rect x="10" y="7" width="1" height="1" fill="#808080"/><rect x="12" y="3" width="7" height="5" fill="#004040"/><rect x="13" y="4" width="5" height="3" fill="#00FFFF"/><rect x="10" y="8" width="10" height="3" fill="#004040"/><rect x="16" y="9" width="3" height="1" fill="#FFFF00"/></svg>
<div class="t" style="left:599px;top:65px;width:23px;text-align:center;font:bold 7.5px 'Liberation Sans', sans-serif;line-height:8px;letter-spacing:0.3px">TCP</div>
<svg style="left:626px;top:64px" width="6" height="4"><path d="M0 0.5h5l-2.5 2.5z" fill="#000"/></svg>
<svg style="left:644px;top:54px" width="23" height="22" viewBox="0 0 23 22" shape-rendering="crispEdges"><rect x="3" y="5" width="4" height="5" fill="#0000FF"/><rect x="4" y="6" width="2" height="1" fill="#40C0FF"/><rect x="8" y="7" width="1" height="1" fill="#808080"/><rect x="10" y="7" width="1" height="1" fill="#808080"/><rect x="12" y="4" width="5" height="4" fill="#004040"/><rect x="13" y="5" width="3" height="2" fill="#00FFFF"/><rect x="10" y="8" width="9" height="3" fill="#004040"/><rect x="15" y="9" width="3" height="1" fill="#FFFF00"/><rect x="8" y="14" width="5" height="1" fill="#000"/><rect x="8" y="16" width="5" height="1" fill="#000"/></svg>
<svg style="left:667px;top:54px" width="23" height="22" viewBox="0 0 23 22" shape-rendering="crispEdges"><rect x="4" y="5" width="2" height="5" fill="#0000FF"/><rect x="6" y="5" width="2" height="5" fill="#800000"/><rect x="4" y="6" width="2" height="1" fill="#40C0FF"/><rect x="11" y="6" width="7" height="1" fill="#800000"/><rect x="11" y="7" width="7" height="1" fill="#A04040"/><rect x="17" y="6" width="1" height="8" fill="#800000"/><rect x="18" y="7" width="1" height="7" fill="#A04040"/><path d="M9 7L12 4V10z" fill="#800000"/><rect x="11" y="11" width="5" height="4" fill="#808080"/><rect x="12" y="12" width="3" height="2" fill="#00FFFF"/><rect x="9" y="15" width="10" height="3" fill="#800000"/><rect x="10" y="16" width="5" height="1" fill="#E0E0E0"/><rect x="15" y="16" width="3" height="1" fill="#FF0000"/></svg>
<svg style="left:303px;top:116px" width="16" height="16" viewBox="0 0 16 16" shape-rendering="crispEdges"><rect x="1" y="3" width="14" height="11" fill="#000080"/><rect x="2" y="4" width="12" height="9" fill="#fff"/><rect x="3" y="5" width="10" height="7" fill="#000"/><rect x="4" y="6" width="8" height="5" fill="#fff"/><rect x="4" y="8" width="2" height="3" fill="#C0C0C0"/><rect x="4" y="7" width="8" height="1" fill="#000"/><rect x="6" y="8" width="1" height="3" fill="#000"/></svg>
<svg style="left:325px;top:115px" width="19" height="19" viewBox="0 0 19 19" shape-rendering="crispEdges"><path d="M5.5 8.5L4.5 2.5h6l2 6z" fill="#C0DCF8" stroke="#8CA8C8" shape-rendering="auto"/><rect x="2" y="8" width="15" height="9" fill="#B0B0B0"/><rect x="3" y="8" width="13" height="3" fill="#F0F0F0"/><rect x="3" y="11" width="13" height="3" fill="#D8D8D8"/><rect x="4" y="14" width="11" height="3" fill="#989898"/><rect x="13" y="12" width="1" height="1" fill="#00C000"/><rect x="2" y="17" width="15" height="1" fill="#C8C8C8"/></svg>
<svg style="left:356px;top:115px" width="16" height="16" viewBox="0 0 16 16" shape-rendering="crispEdges"><rect x="1" y="4" width="8" height="3" fill="#008000"/><rect x="3" y="2" width="3" height="7" fill="#008000"/><rect x="5" y="8" width="10" height="8" fill="#000"/><rect x="6" y="9" width="8" height="2" fill="#808080"/><rect x="6" y="11" width="8" height="4" fill="#fff"/></svg>
<svg style="left:379px;top:115px" width="16" height="16" viewBox="0 0 16 16" shape-rendering="crispEdges"><rect x="1" y="4" width="8" height="3" fill="#008000"/><rect x="3" y="2" width="3" height="7" fill="#008000"/><rect x="5" y="8" width="10" height="8" fill="#408080"/><rect x="6" y="9" width="8" height="6" fill="#90F0F0"/><rect x="7" y="10" width="2" height="1" fill="#60A0A0"/><rect x="10" y="10" width="2" height="1" fill="#60A0A0"/><rect x="7" y="12" width="5" height="1" fill="#60A0A0"/></svg>
<svg style="left:402px;top:115px" width="16" height="16" viewBox="0 0 16 16" shape-rendering="crispEdges"><rect x="1" y="4" width="7" height="3" fill="#FF0000"/><rect x="5" y="8" width="10" height="8" fill="#000"/><rect x="6" y="9" width="8" height="2" fill="#808080"/><rect x="6" y="11" width="8" height="4" fill="#fff"/></svg>
<svg style="left:425px;top:115px" width="16" height="16" viewBox="0 0 16 16" shape-rendering="crispEdges"><rect x="1" y="4" width="7" height="3" fill="#FF0000"/><rect x="9" y="9" width="6" height="2" fill="#00C000"/><rect x="8" y="9" width="2" height="5" fill="#00C000"/><rect x="2" y="12" width="7" height="2" fill="#00C000"/></svg>
<svg style="left:457px;top:117px" width="16" height="16" viewBox="0 0 16 16" shape-rendering="crispEdges"><rect x="1" y="1" width="9" height="6" fill="#000"/><rect x="2" y="2" width="7" height="1" fill="#808080"/><rect x="2" y="3" width="7" height="3" fill="#fff"/><rect x="3" y="4" width="9" height="6" fill="#000"/><rect x="4" y="5" width="7" height="1" fill="#808080"/><rect x="4" y="6" width="7" height="3" fill="#fff"/><rect x="5" y="7" width="9" height="7" fill="#000"/><rect x="6" y="8" width="7" height="1" fill="#808080"/><rect x="6" y="9" width="7" height="4" fill="#fff"/></svg>
<svg style="left:479px;top:116px" width="16" height="16" viewBox="0 0 16 16" shape-rendering="crispEdges"><rect x="2" y="2" width="12" height="5" fill="#000"/><rect x="3" y="3" width="10" height="3" fill="#FFFF00"/><rect x="14" y="4" width="2" height="1" fill="#000"/><rect x="3" y="9" width="12" height="5" fill="#000"/><rect x="4" y="10" width="10" height="3" fill="#00FFFF"/><rect x="1" y="11" width="2" height="1" fill="#000"/></svg>
<svg style="left:503px;top:116px" width="16" height="16" viewBox="0 0 16 16" shape-rendering="crispEdges"><rect x="1" y="2" width="9" height="6" fill="#0050A0"/><rect x="2" y="3" width="7" height="1" fill="#0090FF"/><rect x="2" y="4" width="7" height="3" fill="#00E0FF"/><rect x="5" y="9" width="9" height="6" fill="#0050A0"/><rect x="6" y="10" width="7" height="1" fill="#0090FF"/><rect x="6" y="11" width="7" height="3" fill="#00E0FF"/></svg>
<svg style="left:0;top:0" width="1024" height="768" shape-rendering="crispEdges"><rect x="376" y="198" width="10" height="1" fill="#000"/><rect x="484" y="198" width="97" height="1" fill="#000"/><rect x="376" y="214" width="10" height="1" fill="#000"/><rect x="471" y="214" width="110" height="1" fill="#000"/><rect x="376" y="266" width="60" height="1" fill="#000"/><rect x="435" y="221" width="1" height="46" fill="#000"/><rect x="376" y="282" width="10" height="1" fill="#000"/><rect x="376" y="334" width="31" height="1" fill="#000"/><rect x="406" y="334" width="1" height="65" fill="#000"/><rect x="406" y="398" width="31" height="1" fill="#000"/><rect x="376" y="350" width="10" height="1" fill="#000"/><rect x="511" y="398" width="36" height="1" fill="#000"/><rect x="546" y="230" width="1" height="169" fill="#000"/><rect x="546" y="230" width="35" height="1" fill="#000"/><rect x="427" y="414" width="10" height="1" fill="#000"/><rect x="571" y="246" width="10" height="1" fill="#909090"/><rect x="571" y="262" width="10" height="1" fill="#909090"/><rect x="571" y="278" width="10" height="1" fill="#000"/><rect x="571" y="294" width="10" height="1" fill="#000"/><rect x="571" y="310" width="10" height="1" fill="#000"/><rect x="571" y="326" width="10" height="1" fill="#000"/><rect x="337" y="172" width="39" height="66" fill="#000"/><rect x="338" y="173" width="37" height="17" fill="#C8C8C8"/><rect x="338" y="191" width="37" height="31" fill="#fff"/><rect x="338" y="223" width="37" height="14" fill="#fff"/><rect x="376" y="198" width="10" height="1" fill="#000"/><rect x="376" y="214" width="10" height="1" fill="#000"/><rect x="337" y="240" width="39" height="66" fill="#000"/><rect x="338" y="241" width="37" height="17" fill="#C8C8C8"/><rect x="338" y="259" width="37" height="31" fill="#fff"/><rect x="338" y="291" width="37" height="14" fill="#fff"/><rect x="376" y="266" width="10" height="1" fill="#000"/><rect x="376" y="282" width="10" height="1" fill="#000"/><rect x="337" y="308" width="39" height="66" fill="#000"/><rect x="338" y="309" width="37" height="17" fill="#C8C8C8"/><rect x="338" y="327" width="37" height="31" fill="#fff"/><rect x="338" y="359" width="37" height="14" fill="#fff"/><rect x="376" y="334" width="10" height="1" fill="#000"/><rect x="376" y="350" width="10" height="1" fill="#000"/><rect x="437" y="372" width="74" height="66" fill="#000"/><rect x="438" y="373" width="72" height="17" fill="#C8C8C8"/><rect x="438" y="391" width="72" height="31" fill="#fff"/><rect x="438" y="423" width="72" height="14" fill="#fff"/><rect x="581" y="172" width="109" height="466" fill="#000"/><rect x="582" y="173" width="107" height="17" fill="#C8C8C8"/><rect x="582" y="191" width="107" height="431" fill="#fff"/><rect x="582" y="623" width="107" height="14" fill="#fff"/><rect x="690" y="198" width="10" height="1" fill="#000"/><rect x="690" y="214" width="10" height="1" fill="#000"/><rect x="690" y="230" width="10" height="1" fill="#000"/><rect x="690" y="246" width="10" height="1" fill="#000"/><rect x="690" y="262" width="10" height="1" fill="#000"/><rect x="690" y="278" width="10" height="1" fill="#000"/><rect x="690" y="294" width="10" height="1" fill="#000"/><rect x="690" y="310" width="10" height="1" fill="#000"/><rect x="690" y="326" width="10" height="1" fill="#000"/><rect x="690" y="342" width="10" height="1" fill="#000"/><rect x="690" y="358" width="10" height="1" fill="#000"/><rect x="690" y="374" width="10" height="1" fill="#000"/><rect x="690" y="390" width="10" height="1" fill="#000"/><rect x="690" y="406" width="10" height="1" fill="#000"/><rect x="690" y="422" width="10" height="1" fill="#000"/><rect x="690" y="438" width="10" height="1" fill="#000"/><rect x="690" y="454" width="10" height="1" fill="#000"/><rect x="690" y="470" width="10" height="1" fill="#000"/><rect x="690" y="486" width="10" height="1" fill="#000"/><rect x="690" y="502" width="10" height="1" fill="#000"/><rect x="690" y="518" width="10" height="1" fill="#000"/><rect x="690" y="534" width="10" height="1" fill="#000"/><rect x="690" y="550" width="10" height="1" fill="#000"/><rect x="690" y="566" width="10" height="1" fill="#000"/><rect x="690" y="582" width="10" height="1" fill="#000"/><rect x="690" y="598" width="10" height="1" fill="#000"/><rect x="690" y="614" width="10" height="1" fill="#000"/><rect x="341" y="488" width="58" height="162" fill="#000"/><rect x="342" y="489" width="56" height="17" fill="#C8C8C8"/><rect x="342" y="507" width="56" height="127" fill="#fff"/><rect x="342" y="635" width="56" height="14" fill="#fff"/><rect x="399" y="514" width="10" height="1" fill="#000"/><rect x="399" y="530" width="10" height="1" fill="#000"/><rect x="399" y="546" width="10" height="1" fill="#000"/><rect x="399" y="562" width="10" height="1" fill="#000"/><rect x="399" y="578" width="10" height="1" fill="#000"/><rect x="399" y="594" width="10" height="1" fill="#000"/><rect x="399" y="610" width="10" height="1" fill="#000"/><rect x="399" y="626" width="10" height="1" fill="#000"/><rect x="386" y="192" width="98" height="13" fill="#A8A898"/><rect x="387" y="193" width="96" height="11" fill="#C0F8C8"/><rect x="386" y="208" width="85" height="13" fill="#A8A898"/><rect x="387" y="209" width="83" height="11" fill="#C0F8C8"/><rect x="468" y="272" width="103" height="13" fill="#A8A898"/><rect x="469" y="273" width="101" height="11" fill="#FFFFA0"/><rect x="562" y="288" width="9" height="13" fill="#A8A898"/><rect x="563" y="289" width="7" height="11" fill="#00FF00"/><rect x="562" y="304" width="9" height="13" fill="#A8A898"/><rect x="563" y="305" width="7" height="11" fill="#00FF00"/><rect x="454" y="320" width="117" height="13" fill="#A8A898"/><rect x="455" y="321" width="115" height="11" fill="#FFFFA0"/><rect x="317" y="408" width="110" height="13" fill="#A8A898"/><rect x="318" y="409" width="108" height="11" fill="#FFFFA0"/><rect x="700" y="208" width="125" height="13" fill="#A8A898"/><rect x="701" y="209" width="123" height="11" fill="#C0F8C8"/><rect x="700" y="224" width="132" height="13" fill="#A8A898"/><rect x="701" y="225" width="130" height="11" fill="#C0F8C8"/><rect x="700" y="240" width="133" height="13" fill="#A8A898"/><rect x="701" y="241" width="131" height="11" fill="#C0F8C8"/><rect x="700" y="288" width="123" height="13" fill="#A8A898"/><rect x="701" y="289" width="121" height="11" fill="#C0F8C8"/><rect x="700" y="336" width="122" height="13" fill="#A8A898"/><rect x="701" y="337" width="120" height="11" fill="#C0F8C8"/><rect x="409" y="604" width="127" height="13" fill="#A8A898"/><rect x="410" y="605" width="125" height="11" fill="#C0F8C8"/><rect x="409" y="620" width="127" height="13" fill="#A8A898"/><rect x="410" y="621" width="125" height="11" fill="#C0F8C8"/></svg>
<div class="t" style="left:337px;top:175px;width:39px;text-align:center;font:bold 11.5px 'Liberation Sans', sans-serif;line-height:13px;letter-spacing:-0.3px">BTN</div>
<div class="t" style="left:173px;top:192px;width:200px;text-align:right;font:9.8px 'Liberation Sans', sans-serif;line-height:11px;">Output</div>
<div class="t" style="left:173px;top:208px;width:200px;text-align:right;font:9.8px 'Liberation Sans', sans-serif;line-height:11px;">Input</div>
<div class="t" style="left:338px;top:224px;width:37px;overflow:hidden;font:10px 'Liberation Sans', sans-serif;line-height:12px;padding-left:1px">S03_Start</div>
<div class="t" style="left:337px;top:243px;width:39px;text-align:center;font:bold 11.5px 'Liberation Sans', sans-serif;line-height:13px;letter-spacing:-0.3px">BTN</div>
<div class="t" style="left:173px;top:260px;width:200px;text-align:right;font:9.8px 'Liberation Sans', sans-serif;line-height:11px;">Output</div>
<div class="t" style="left:173px;top:276px;width:200px;text-align:right;font:9.8px 'Liberation Sans', sans-serif;line-height:11px;">Input</div>
<div class="t" style="left:338px;top:292px;width:37px;overflow:hidden;font:10px 'Liberation Sans', sans-serif;line-height:12px;padding-left:1px">S03_Stop</div>
<div class="t" style="left:337px;top:311px;width:39px;text-align:center;font:bold 11.5px 'Liberation Sans', sans-serif;line-height:13px;letter-spacing:-0.3px">BTN</div>
<div class="t" style="left:173px;top:328px;width:200px;text-align:right;font:9.8px 'Liberation Sans', sans-serif;line-height:11px;">Output</div>
<div class="t" style="left:173px;top:344px;width:200px;text-align:right;font:9.8px 'Liberation Sans', sans-serif;line-height:11px;">Input</div>
<div class="t" style="left:338px;top:360px;width:37px;overflow:hidden;font:10px 'Liberation Sans', sans-serif;line-height:12px;padding-left:1px">S03_Emrg</div>
<div class="t" style="left:437px;top:375px;width:74px;text-align:center;font:bold 11.5px 'Liberation Sans', sans-serif;line-height:13px;letter-spacing:-0.3px">OR</div>
<div class="t" style="left:440px;top:392px;font:9.8px 'Liberation Sans', sans-serif;line-height:11px;">Input 00</div>
<div class="t" style="left:440px;top:408px;font:9.8px 'Liberation Sans', sans-serif;line-height:11px;">Input 01</div>
<div class="t" style="left:374px;top:425px;width:200px;text-align:center;font:10px 'Liberation Sans', sans-serif;line-height:11px;line-height:12px">S03</div>
<div class="t" style="left:470px;top:392px;width:37px;text-align:right;font:9.8px 'Liberation Sans', sans-serif;line-height:11px">Output</div>
<div class="t" style="left:581px;top:175px;width:109px;text-align:center;font:bold 11.5px 'Liberation Sans', sans-serif;line-height:13px;letter-spacing:-0.3px">SEQB</div>
<div class="t" style="left:584px;top:192px;font:9.8px 'Liberation Sans', sans-serif;line-height:11px;">Start</div>
<div class="t" style="left:584px;top:208px;font:9.8px 'Liberation Sans', sans-serif;line-height:11px;">Stop</div>
<div class="t" style="left:584px;top:224px;font:9.8px 'Liberation Sans', sans-serif;line-height:11px;">StopEmrg</div>
<div class="t" style="left:584px;top:240px;font:9.8px 'Liberation Sans', sans-serif;line-height:11px;">Susp</div>
<div class="t" style="left:584px;top:256px;font:9.8px 'Liberation Sans', sans-serif;line-height:11px;">SuspStart</div>
<div class="t" style="left:584px;top:272px;font:9.8px 'Liberation Sans', sans-serif;line-height:11px;">ZdvOk</div>
<div class="t" style="left:584px;top:288px;font:9.8px 'Liberation Sans', sans-serif;line-height:11px;">DvuOk</div>
<div class="t" style="left:584px;top:304px;font:9.8px 'Liberation Sans', sans-serif;line-height:11px;">AuxOk</div>
<div class="t" style="left:584px;top:320px;font:9.8px 'Liberation Sans', sans-serif;line-height:11px;">AspOk</div>
<div class="t" style="left:487px;top:192px;width:200px;text-align:right;font:9.8px 'Liberation Sans', sans-serif;line-height:11px;">Sost</div>
<div class="t" style="left:487px;top:208px;width:200px;text-align:right;font:9.8px 'Liberation Sans', sans-serif;line-height:11px;">SetZdv</div>
<div class="t" style="left:487px;top:224px;width:200px;text-align:right;font:9.8px 'Liberation Sans', sans-serif;line-height:11px;">CntOn</div>
<div class="t" style="left:487px;top:240px;width:200px;text-align:right;font:9.8px 'Liberation Sans', sans-serif;line-height:11px;">CntOff</div>
<div class="t" style="left:487px;top:256px;width:200px;text-align:right;font:9.8px 'Liberation Sans', sans-serif;line-height:11px;">Cnt</div>
<div class="t" style="left:487px;top:272px;width:200px;text-align:right;font:9.8px 'Liberation Sans', sans-serif;line-height:11px;">CntStop</div>
<div class="t" style="left:487px;top:288px;width:200px;text-align:right;font:9.8px 'Liberation Sans', sans-serif;line-height:11px;">ZdvBad</div>
<div class="t" style="left:487px;top:304px;width:200px;text-align:right;font:9.8px 'Liberation Sans', sans-serif;line-height:11px;">DvuBad</div>
<div class="t" style="left:487px;top:320px;width:200px;text-align:right;font:9.8px 'Liberation Sans', sans-serif;line-height:11px;">AuxBad</div>
<div class="t" style="left:487px;top:336px;width:200px;text-align:right;font:9.8px 'Liberation Sans', sans-serif;line-height:11px;">AspBad</div>
<div class="t" style="left:487px;top:352px;width:200px;text-align:right;font:9.8px 'Liberation Sans', sans-serif;line-height:11px;">ReadyToStart</div>
<div class="t" style="left:487px;top:368px;width:200px;text-align:right;font:9.8px 'Liberation Sans', sans-serif;line-height:11px;">Stoping</div>
<div class="t" style="left:487px;top:384px;width:200px;text-align:right;font:9.8px 'Liberation Sans', sans-serif;line-height:11px;">WaitZdvOk</div>
<div class="t" style="left:487px;top:400px;width:200px;text-align:right;font:9.8px 'Liberation Sans', sans-serif;line-height:11px;">QntOn</div>
<div class="t" style="left:487px;top:416px;width:200px;text-align:right;font:9.8px 'Liberation Sans', sans-serif;line-height:11px;">QntOff</div>
<div class="t" style="left:487px;top:432px;width:200px;text-align:right;font:9.8px 'Liberation Sans', sans-serif;line-height:11px;">DlyStart</div>
<div class="t" style="left:487px;top:448px;width:200px;text-align:right;font:9.8px 'Liberation Sans', sans-serif;line-height:11px;">DlyStopZdv</div>
<div class="t" style="left:487px;top:464px;width:200px;text-align:right;font:9.8px 'Liberation Sans', sans-serif;line-height:11px;">DlyStopDvu</div>
<div class="t" style="left:487px;top:480px;width:200px;text-align:right;font:9.8px 'Liberation Sans', sans-serif;line-height:11px;">DlyStopAux</div>
<div class="t" style="left:487px;top:496px;width:200px;text-align:right;font:9.8px 'Liberation Sans', sans-serif;line-height:11px;">DlyStopAsp</div>
<div class="t" style="left:487px;top:512px;width:200px;text-align:right;font:9.8px 'Liberation Sans', sans-serif;line-height:11px;">Flags</div>
<div class="t" style="left:487px;top:528px;width:200px;text-align:right;font:9.8px 'Liberation Sans', sans-serif;line-height:11px;">StartSpeed</div>
<div class="t" style="left:487px;top:544px;width:200px;text-align:right;font:9.8px 'Liberation Sans', sans-serif;line-height:11px;">StopSpeed</div>
<div class="t" style="left:487px;top:560px;width:200px;text-align:right;font:9.8px 'Liberation Sans', sans-serif;line-height:11px;">DlyMesZdv</div>
<div class="t" style="left:487px;top:576px;width:200px;text-align:right;font:9.8px 'Liberation Sans', sans-serif;line-height:11px;">DlyMesDvu</div>
<div class="t" style="left:487px;top:592px;width:200px;text-align:right;font:9.8px 'Liberation Sans', sans-serif;line-height:11px;">DlyMesAux</div>
<div class="t" style="left:487px;top:608px;width:200px;text-align:right;font:9.8px 'Liberation Sans', sans-serif;line-height:11px;">DlyMesAsp</div>
<div class="t" style="left:535px;top:625px;width:200px;text-align:center;font:10px 'Liberation Sans', sans-serif;line-height:11px;line-height:12px">S03</div>
<div class="t" style="left:341px;top:491px;width:58px;text-align:center;font:bold 11.5px 'Liberation Sans', sans-serif;line-height:13px;letter-spacing:-0.3px">BIT</div>
<div class="t" style="left:196px;top:508px;width:200px;text-align:right;font:9.8px 'Liberation Sans', sans-serif;line-height:11px;">Dst_56</div>
<div class="t" style="left:196px;top:524px;width:200px;text-align:right;font:9.8px 'Liberation Sans', sans-serif;line-height:11px;">Dst_55</div>
<div class="t" style="left:196px;top:540px;width:200px;text-align:right;font:9.8px 'Liberation Sans', sans-serif;line-height:11px;">Dst_242</div>
<div class="t" style="left:196px;top:556px;width:200px;text-align:right;font:9.8px 'Liberation Sans', sans-serif;line-height:11px;">Dst_251</div>
<div class="t" style="left:196px;top:572px;width:200px;text-align:right;font:9.8px 'Liberation Sans', sans-serif;line-height:11px;">231</div>
<div class="t" style="left:196px;top:588px;width:200px;text-align:right;font:9.8px 'Liberation Sans', sans-serif;line-height:11px;">240</div>
<div class="t" style="left:196px;top:604px;width:200px;text-align:right;font:9.8px 'Liberation Sans', sans-serif;line-height:11px;">mode_ris</div>
<div class="t" style="left:196px;top:620px;width:200px;text-align:right;font:9.8px 'Liberation Sans', sans-serif;line-height:11px;">mode_oves</div>
<div class="t" style="left:270px;top:637px;width:200px;text-align:center;font:10px 'Liberation Sans', sans-serif;line-height:11px;line-height:12px">S03</div>
<div class="t" style="left:388px;top:193px;font:9.3px 'Liberation Sans', sans-serif;line-height:12px;letter-spacing:0.025px">TRIG.S03_main_2.Set</div>
<div class="t" style="left:388px;top:209px;font:9.3px 'Liberation Sans', sans-serif;line-height:12px;letter-spacing:0.087px">OR.Beep1.Input 02</div>
<div class="t" style="left:470px;top:273px;font:9.3px 'Liberation Sans', sans-serif;line-height:12px;letter-spacing:0.160px">OR.S03_ZdvOk.Output</div>
<div class="t" style="left:563px;top:288px;width:7px;text-align:center;font:9.8px 'Liberation Sans', sans-serif;line-height:11px">1</div>
<div class="t" style="left:563px;top:304px;width:7px;text-align:center;font:9.8px 'Liberation Sans', sans-serif;line-height:11px">1</div>
<div class="t" style="left:456px;top:321px;font:9.3px 'Liberation Sans', sans-serif;line-height:12px;letter-spacing:0.164px">AND.S03_othodOk.Output</div>
<div class="t" style="left:319px;top:409px;font:9.3px 'Liberation Sans', sans-serif;line-height:12px;letter-spacing:0.077px">AND.M_ErrorFlag.Output</div>
<div class="t" style="left:702px;top:209px;font:9.3px 'Liberation Sans', sans-serif;line-height:12px;letter-spacing:0.194px">(11) ZDVA.001 PУ.Enable;...</div>
<div class="t" style="left:702px;top:225px;font:9.3px 'Liberation Sans', sans-serif;line-height:12px;letter-spacing:0.113px">(19) SQBA.S03__12.CnrOn;...</div>
<div class="t" style="left:702px;top:241px;font:9.3px 'Liberation Sans', sans-serif;line-height:12px;letter-spacing:0.171px">(19) SQBA.S03__12.CntOff;...</div>
<div class="t" style="left:702px;top:289px;font:9.3px 'Liberation Sans', sans-serif;line-height:12px;letter-spacing:0.202px">ALM.Beep1 MDTA.Input 3C</div>
<div class="t" style="left:702px;top:337px;font:9.3px 'Liberation Sans', sans-serif;line-height:12px;letter-spacing:0.180px">ALM.Beep1 MDTA.Input 3B</div>
<div class="t" style="left:411px;top:605px;font:9.3px 'Liberation Sans', sans-serif;line-height:12px;letter-spacing:0.234px">(6) ZDVA.002 PУ.DoOpen;...</div>
<div class="t" style="left:411px;top:621px;font:9.3px 'Liberation Sans', sans-serif;line-height:12px;letter-spacing:0.234px">(8) ZDVA.001 PУ.DoOpen;...</div>
</body></html>
